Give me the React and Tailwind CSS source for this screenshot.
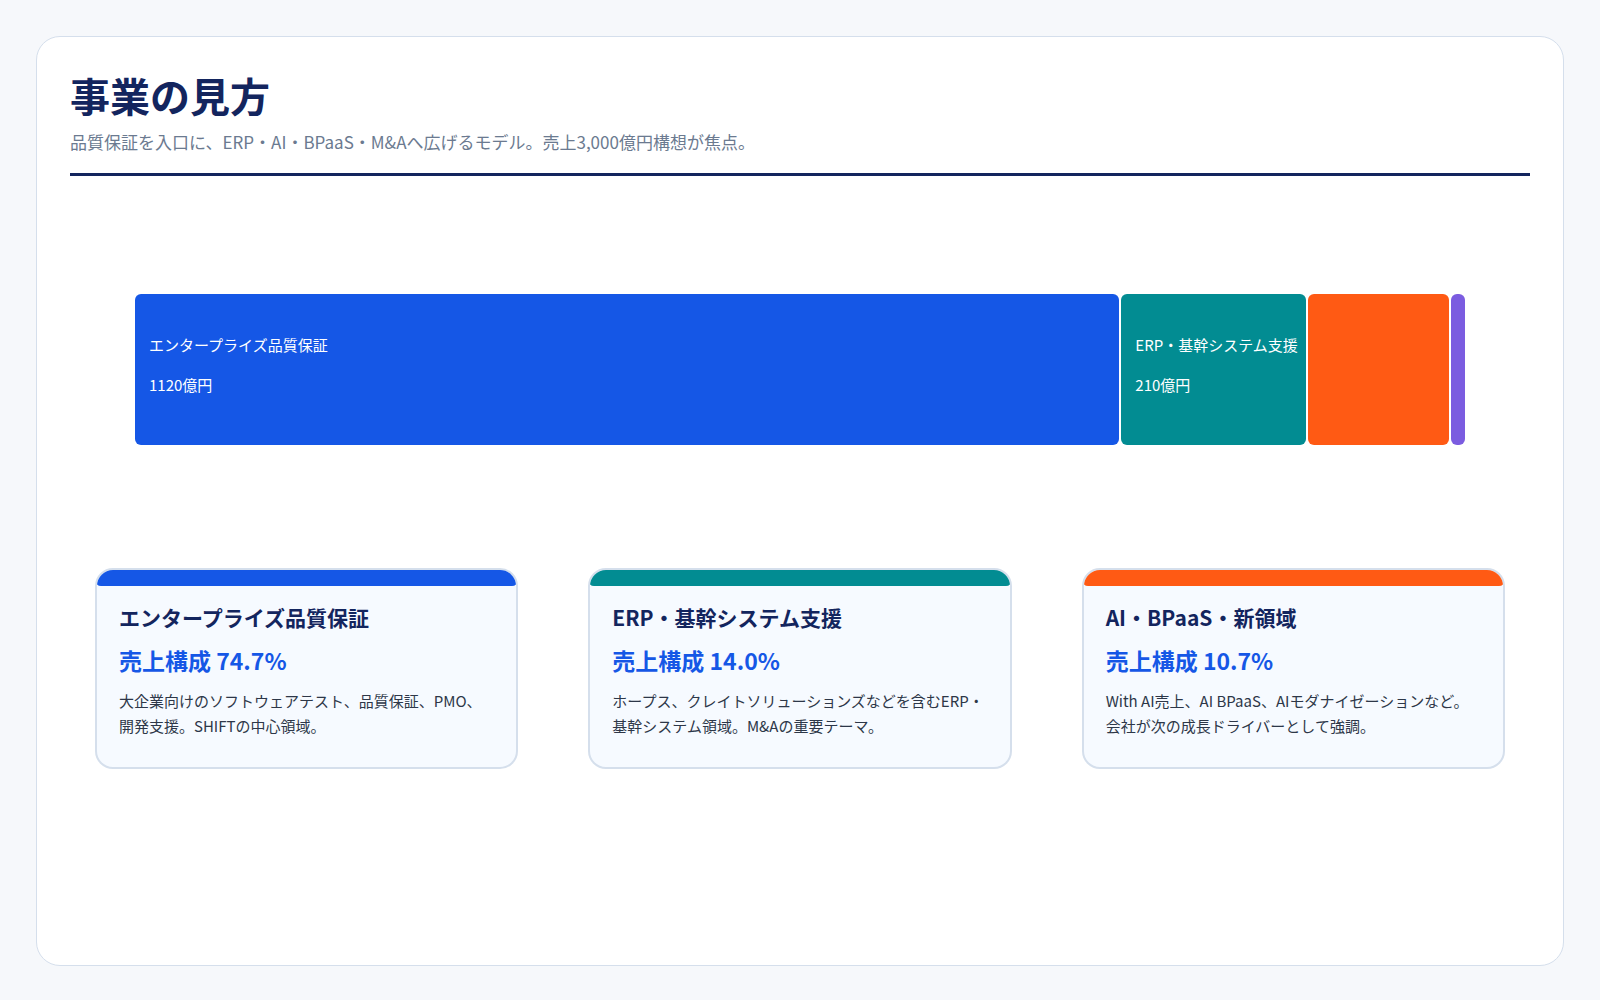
const FONT = { fontFamily: '"Noto Sans CJK JP", "Noto Sans", sans-serif' }

const segments = [
  { label: 'エンタープライズ品質保証', value: '1120億円', pct: 74.7, color: 'bg-[#1557e6]' },
  { label: 'ERP・基幹システム支援', value: '210億円', pct: 14.0, color: 'bg-[#028c92]' },
  { label: '', value: '', pct: 10.7, color: 'bg-[#ff5a14]' },
  { label: '', value: '', pct: 0.7, color: 'bg-[#7b5ce0]' },
]

const cards = [
  { title: 'エンタープライズ品質保証', pct: '売上構成 74.7%', bar: 'bg-[#1557e6]', desc: '大企業向けのソフトウェアテスト、品質保証、PMO、開発支援。SHIFTの中心領域。' },
  { title: 'ERP・基幹システム支援', pct: '売上構成 14.0%', bar: 'bg-[#028c92]', desc: 'ホープス、クレイトソリューションズなどを含むERP・基幹システム領域。M&Aの重要テーマ。' },
  { title: 'AI・BPaaS・新領域', pct: '売上構成 10.7%', bar: 'bg-[#ff5a14]', desc: 'With AI売上、AI BPaaS、AIモダナイゼーションなど。会社が次の成長ドライバーとして強調。' },
]

export default function App() {
  return (
    <div className="min-h-screen bg-[#f6f8fb] p-[36px]" style={FONT}>
      <div className="h-[930px] rounded-[24px] border border-[#d5dfec] bg-white px-[33px] pt-[30px]">
        <h1 className="text-[40px] font-bold leading-[56px] text-[#13255e]">事業の見方</h1>
        <p className="mt-[6px] text-[17px] text-[#6b7a90]">品質保証を入口に、ERP・AI・BPaaS・M&Aへ広げるモデル。売上3,000億円構想が焦点。</p>
        <div className="mt-[18px] h-[3px] bg-[#13255e]" />

        <div className="mx-[65px] mt-[118px] flex h-[151px] gap-[2px]">
          {segments.map((s, i) => (
            <div key={i} className={`${s.color} overflow-hidden whitespace-nowrap rounded-[6px] pl-[14px] pt-[40px] text-[15px] text-white`} style={{ width: `${s.pct}%` }}>
              {s.label && <div>{s.label}</div>}
              {s.value && <div className="mt-[18px]">{s.value}</div>}
            </div>
          ))}
        </div>

        <div className="mx-[25px] mt-[123px] grid grid-cols-3 gap-[70px]">
          {cards.map((c) => (
            <div key={c.title} className="h-[201px] overflow-hidden rounded-[18px] border-2 border-[#d5dfec] bg-[#f6faff]">
              <div className={`${c.bar} -mx-[2px] -mt-[2px] h-[18px] rounded-t-[10px] rounded-b-[6px]`} />
              <div className="px-[22px] pt-[16px]">
                <h3 className="text-[21px] font-bold text-[#13255e]">{c.title}</h3>
                <div className="mt-[10px] text-[23px] font-bold text-[#1557e6]">{c.pct}</div>
                <p className="mt-[10px] text-[15px] leading-[25px] text-[#2d3748]" style={{ lineBreak: 'anywhere' }}>{c.desc}</p>
              </div>
            </div>
          ))}
        </div>
      </div>
    </div>
  )
}
